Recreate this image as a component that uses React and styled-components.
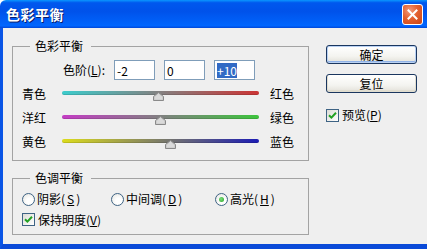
import React from "react";
import styled, { createGlobalStyle } from "styled-components";

const GlobalStyle = createGlobalStyle`
  html, body { margin: 0; padding: 0; background: #ffffff; }
  body { font-family: "Noto Sans CJK SC", "Noto Sans", sans-serif; font-size: 12px; color: #000; }
  u { text-decoration: underline; text-underline-offset: 1px; }
`;

const Window = styled.div`
  width: 427px;
  height: 249px;
  display: flex;
  flex-direction: column;
  overflow: hidden;
`;

const TitleBar = styled.div`
  height: 28px;
  flex: none;
  display: flex;
  align-items: center;
  justify-content: space-between;
  padding: 0 4px 0 6px;
  background: linear-gradient(
    to bottom,
    #0a97ff 0%,
    #0058ee 10%,
    #0052ea 40%,
    #0063fb 85%,
    #0066ff 92%,
    #0047d8 100%
  );
  border-top-left-radius: 6px;
`;

const TitleText = styled.span`
  color: #fff;
  font-size: 14px;
  font-weight: bold;
  letter-spacing: 0.5px;
  text-shadow: 1px 1px 0 #0a1e6a;
  line-height: 1;
`;

const CloseButton = styled.div`
  width: 19px;
  height: 19px;
  border: 1px solid #ffffff;
  border-radius: 3px;
  background: radial-gradient(circle at 35% 30%, #f29a7c 0%, #e3602f 45%, #c84416 100%);
  display: flex;
  align-items: center;
  justify-content: center;
  margin-top: 1px;
`;

const Frame = styled.div`
  flex: 1;
  display: flex;
  align-items: flex-start;
  background: #efefef;
  border-left: 3px solid #0a55e6;
  border-bottom: 5px solid #0a4ad8;
  padding: 11px 0 0 9px;
`;

const LeftColumn = styled.div`
  width: 297px;
  display: flex;
  flex-direction: column;
  gap: 10px;
`;

const Group = styled.fieldset`
  margin: 0;
  min-width: 0;
  border: 1px solid #a3a3a3;
  padding: ${(p) => p.$pad};
`;

const Legend = styled.legend`
  margin-left: 17px;
  padding: 0 8px 0 5px;
  line-height: 14px;
  font-size: 12px;
`;

const LevelsRow = styled.div`
  display: flex;
  align-items: center;
  height: 20px;
  padding-left: 50px;
  gap: 9px;
`;

const LevelsLabel = styled.span`
  line-height: 14px;
  white-space: nowrap;
`;

const NumBox = styled.div`
  width: 41px;
  height: 20px;
  box-sizing: border-box;
  border: 1px solid #7f9db9;
  background: #fff;
  display: flex;
  align-items: center;
  padding-left: 2px;
  font-size: 12px;
`;

const Selected = styled.span`
  background: #316ac5;
  color: #fff;
  line-height: 15px;
`;

const SliderRow = styled.div`
  height: 24px;
  display: flex;
  align-items: center;
  padding-left: 9px;
`;

const SideLabel = styled.span`
  width: ${(p) => p.$w}px;
  flex: none;
  white-space: nowrap;
  line-height: 14px;
`;

const Track = styled.div`
  position: relative;
  width: 197px;
  height: 4px;
  flex: none;
  margin-right: 11px;
  margin-top: -2px;
  border-radius: 2px;
  background: linear-gradient(to right, ${(p) => p.$from}, ${(p) => p.$to});
  box-shadow: inset 0 -1px 0 rgba(0, 0, 0, 0.12);
`;

const Thumb = styled.svg`
  position: absolute;
  top: 1px;
  width: 11px;
  height: 9px;
  margin-left: -5.5px;
`;

const RadioRow = styled.div`
  display: grid;
  grid-template-columns: 89px 104px auto;
  height: 18px;
  align-items: center;
  padding-left: 9px;
`;

const OptionItem = styled.label`
  display: flex;
  align-items: center;
  gap: 2px;
  white-space: nowrap;
  line-height: 14px;
`;

const RadioCircle = styled.span`
  width: 11px;
  height: 11px;
  border: 1px solid #3e6384;
  border-radius: 50%;
  background: radial-gradient(circle at 60% 65%, #ffffff 30%, #e2e2dc 100%);
  display: flex;
  align-items: center;
  justify-content: center;
  flex: none;
`;

const RadioDot = styled.span`
  width: 5px;
  height: 5px;
  border-radius: 50%;
  background: radial-gradient(circle at 40% 40%, #7ee07e, #21a121);
`;

const CheckRow = styled.div`
  height: 18px;
  display: flex;
  align-items: center;
  padding-left: 9px;
`;

const CheckBox = styled.span`
  width: 11px;
  height: 11px;
  border: 1px solid #3e6384;
  background: linear-gradient(135deg, #dcdcd6, #ffffff);
  display: flex;
  align-items: center;
  justify-content: center;
  flex: none;
  margin-right: 3px;
`;

const RightColumn = styled.div`
  margin-left: 17px;
  margin-top: 6px;
  width: 91px;
  display: flex;
  flex-direction: column;
  gap: 10px;
`;

const Button = styled.div`
  height: 19px;
  box-sizing: border-box;
  border: 1px solid #1a365f;
  border-radius: 3px;
  background: linear-gradient(to bottom, #ffffff 0%, #f4f4f0 60%, #e2e0d8 100%);
  box-shadow: ${(p) =>
    p.$default
      ? "inset 0 0 0 1px #b9d1f3, inset 0 -1px 0 1px #8fb2e8"
      : "inset 0 -1px 0 1px #e0ddd0"};
  display: flex;
  align-items: center;
  justify-content: center;
  font-size: 12px;
  line-height: 14px;
`;

const PreviewRow = styled.div`
  display: flex;
  align-items: center;
  margin-top: 5px;
  line-height: 14px;
`;

const sliders = [
  { left: "青色", right: "红色", from: "#3ccccc", to: "#cc3434", value: -2 },
  { left: "洋红", right: "绿色", from: "#c43cc4", to: "#3cc43c", value: 0 },
  { left: "黄色", right: "蓝色", from: "#dcdc1c", to: "#1c1cb4", value: 10 },
];

function Check() {
  return (
    <svg width="9" height="9" viewBox="0 0 9 9">
      <path d="M1 4.2 L3.4 6.6 L8 1.8" fill="none" stroke="#21a121" strokeWidth="2" />
    </svg>
  );
}

function Slider({ left, right, from, to, value }) {
  const pct = 50 + value / 2;
  return (
    <SliderRow>
      <SideLabel $w={40}>{left}</SideLabel>
      <Track $from={from} $to={to}>
        <Thumb viewBox="0 0 11 9" style={{ left: `${pct}%` }}>
          <path
            d="M5.5 0.5 L10.5 4.5 L10.5 8.5 L0.5 8.5 L0.5 4.5 Z"
            fill="#c8c8c8"
            stroke="#8a8a8a"
            strokeWidth="1"
          />
          <path d="M5.5 1.8 L9.3 4.9 L9.3 7.4 L1.7 7.4 L1.7 4.9 Z" fill="#dadada" />
        </Thumb>
      </Track>
      <SideLabel $w={30}>{right}</SideLabel>
    </SliderRow>
  );
}

export default function App() {
  return (
    <>
      <GlobalStyle />
      <Window>
        <TitleBar>
          <TitleText>色彩平衡</TitleText>
          <CloseButton>
            <svg width="11" height="11" viewBox="0 0 11 11">
              <path d="M1.5 1.5 L9.5 9.5 M9.5 1.5 L1.5 9.5" stroke="#fff" strokeWidth="2" strokeLinecap="square" />
            </svg>
          </CloseButton>
        </TitleBar>
        <Frame>
          <LeftColumn>
            <Group $pad="7px 0 6px 0">
              <Legend>色彩平衡</Legend>
              <LevelsRow>
                <LevelsLabel>
                  色阶(<u>L</u>):
                </LevelsLabel>
                <NumBox>-2</NumBox>
                <NumBox>0</NumBox>
                <NumBox>
                  <Selected>+10</Selected>
                </NumBox>
              </LevelsRow>
              <div style={{ height: 2 }} />
              {sliders.map((s) => (
                <Slider key={s.left} {...s} />
              ))}
            </Group>
            <Group $pad="5px 0 6px 0">
              <Legend>色调平衡</Legend>
              <RadioRow>
                <OptionItem>
                  <RadioCircle />
                  阴影(<u>S</u>)
                </OptionItem>
                <OptionItem>
                  <RadioCircle />
                  中间调(<u>D</u>)
                </OptionItem>
                <OptionItem>
                  <RadioCircle>
                    <RadioDot />
                  </RadioCircle>
                  高光(<u>H</u>)
                </OptionItem>
              </RadioRow>
              <div style={{ height: 2 }} />
              <CheckRow>
                <CheckBox>
                  <Check />
                </CheckBox>
                保持明度(<u>V</u>)
              </CheckRow>
            </Group>
          </LeftColumn>
          <RightColumn>
            <Button $default>确定</Button>
            <Button>复位</Button>
            <PreviewRow>
              <CheckBox>
                <Check />
              </CheckBox>
              预览(<u>P</u>)
            </PreviewRow>
          </RightColumn>
        </Frame>
      </Window>
    </>
  );
}
